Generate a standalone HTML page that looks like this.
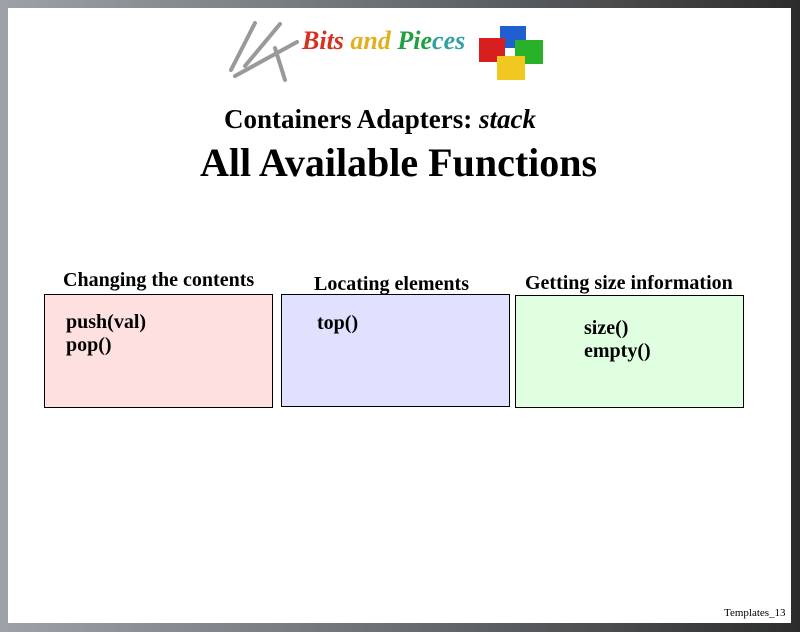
<!DOCTYPE html>
<html><head><style>
body{margin:0;width:800px;height:632px;overflow:hidden;background:linear-gradient(90deg,#9ca2a8 0%,#6a6e72 50%,#2c2c2c 100%);font-family:"Liberation Serif",serif;}
#w{position:absolute;left:8px;top:8px;width:783px;height:615px;background:#fff;}
.t{position:absolute;font-weight:bold;color:#000;white-space:nowrap;}
.b{position:absolute;border:1px solid #000;}
</style></head><body>
<div id="w"></div>
<svg style="position:absolute;left:225px;top:18px" width="80" height="68">
<g stroke="#999" stroke-width="4" stroke-linecap="round">
<line x1="30" y1="5" x2="6" y2="52"/><line x1="55" y1="6" x2="20" y2="48"/>
<line x1="72" y1="24" x2="10" y2="58"/><line x1="50" y1="30" x2="60" y2="62"/></g></svg>
<div class="t" style="left:302px;top:26px;font-size:26px;font-style:italic"><span style="color:#d83020">Bits</span> <span style="color:#e0b020">and</span> <span style="color:#20a040">Pie</span><span style="color:#30a0a0">ces</span></div>
<svg style="position:absolute;left:475px;top:22px" width="75" height="62">
<rect x="25" y="4" width="26" height="22" fill="#1f5fd0"/>
<rect x="4" y="16" width="26" height="24" fill="#d81f1f"/>
<rect x="40" y="18" width="28" height="24" fill="#2ab12a"/>
<rect x="22" y="34" width="28" height="24" fill="#f0c820"/></svg>
<div class="t" style="left:224px;top:104px;font-size:27px">Containers Adapters: <i>stack</i></div>
<div class="t" style="left:200px;top:139px;font-size:40px">All Available Functions</div>
<div class="t" style="left:63px;top:269px;font-size:20px">Changing the contents</div>
<div class="t" style="left:314px;top:273px;font-size:20px">Locating elements</div>
<div class="t" style="left:525px;top:272px;font-size:20px">Getting size information</div>
<div class="b" style="left:44px;top:294px;width:227px;height:112px;background:#ffe0e0"></div>
<div class="b" style="left:281px;top:294px;width:227px;height:111px;background:#e0e0ff"></div>
<div class="b" style="left:515px;top:295px;width:227px;height:111px;background:#e0ffe0"></div>
<div class="t" style="left:66px;top:311px;font-size:20px;line-height:23px">push(val)<br>pop()</div>
<div class="t" style="left:317px;top:312px;font-size:20px">top()</div>
<div class="t" style="left:584px;top:317px;font-size:20px;line-height:23px">size()<br>empty()</div>
<div style="position:absolute;left:724px;top:607px;font-size:11px">Templates_13</div>
</body></html>
